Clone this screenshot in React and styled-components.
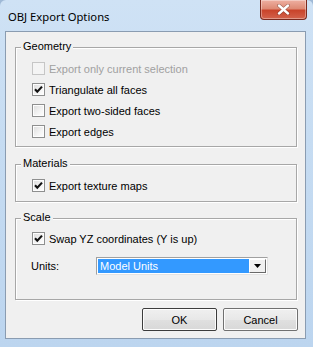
import React from "react";
import styled, { createGlobalStyle } from "styled-components";

const Global = createGlobalStyle`
  html, body { margin: 0; padding: 0; background: #9fb9d6; }
  body { width: 313px; height: 347px; overflow: hidden; }
  * { box-sizing: border-box; }
`;

const Window = styled.div`
  width: 313px;
  height: 347px;
  display: flex;
  flex-direction: column;
  padding: 0 7px 8px 5px;
  background: linear-gradient(180deg, #cfe2f5 0%, #c6dcf2 40%, #bcd5ef 100%);
  border-radius: 6px 6px 0 0;
  font-family: "Liberation Sans", Arial, sans-serif;
  font-size: 11px;
  color: #000;
`;

const TitleBar = styled.div`
  height: 31px;
  flex: none;
  display: flex;
  justify-content: space-between;
  align-items: flex-start;
`;

const Title = styled.div`
  font-family: "Noto Sans", "Open Sans", sans-serif;
  font-size: 11.25px;
  line-height: 16px;
  margin: 9px 0 0 3px;
  color: #000;
`;

const CloseButton = styled.div`
  width: 47px;
  height: 20px;
  margin-right: -1px;
  border: 1px solid #7a2a1f;
  border-top: none;
  border-radius: 0 0 4px 4px;
  background: linear-gradient(180deg, #eeb0a2 0%, #de8a75 45%, #c9442b 55%, #d3634c 100%);
  box-shadow: inset 0 0 0 1px rgba(255, 255, 255, 0.35);
  display: flex;
  align-items: center;
  justify-content: center;
`;

const Client = styled.div`
  flex: 1;
  display: flex;
  flex-direction: column;
  background: #f0f0f0;
  border: 1px solid #8a9cb1;
  padding: 15px 8px 7px 9px;
`;

const Group = styled.div`
  display: flex;
  flex-direction: column;
  border: 1px solid #a7a7a7;
  box-shadow: 1px 1px 0 #fff, inset 1px 1px 0 #fff;
  margin-top: ${(p) => p.$gap || 0}px;
  padding-bottom: ${(p) => p.$bottom}px;
`;

const Legend = styled.span`
  align-self: flex-start;
  margin: -8px 0 0 5px;
  padding: 0 2px;
  line-height: 13px;
  background: #f0f0f0;
`;

const Rows = styled.div`
  display: flex;
  flex-direction: column;
  padding-left: 16px;
  margin-top: ${(p) => p.$top}px;
`;

const Row = styled.label`
  height: 21px;
  display: flex;
  align-items: center;
  gap: 4px;
  color: ${(p) => (p.$disabled ? "#a0a0a0" : "#000")};
`;

const Box = styled.span`
  width: 13px;
  height: 13px;
  flex: none;
  border: 1px solid ${(p) => (p.$disabled ? "#c6c6c6" : "#8e8f8f")};
  background: ${(p) =>
    p.$disabled
      ? "#f4f4f4"
      : "linear-gradient(135deg, #dcdcdc 0%, #f4f4f4 60%, #ffffff 100%)"};
  box-shadow: inset 0 0 0 1px ${(p) => (p.$disabled ? "#f4f4f4" : "#fdfdfd")};
  display: flex;
  align-items: center;
  justify-content: center;
`;

const UnitsRow = styled.div`
  display: flex;
  align-items: center;
  padding-left: 15px;
  margin-top: 8px;
`;

const UnitsLabel = styled.span`
  width: 65px;
  flex: none;
`;

const Select = styled.div`
  width: 172px;
  height: 18px;
  display: flex;
  border: 1px solid #a0a0a0;
  border-right-color: #e3e3e3;
  border-bottom-color: #e3e3e3;
  background: #fff;
  padding: 1px;
`;

const SelectValue = styled.div`
  flex: 1;
  background: #3399ff;
  color: #fff;
  line-height: 14px;
  padding-left: 2px;
`;

const DropButton = styled.div`
  width: 17px;
  flex: none;
  background: #f0f0f0;
  border: 1px solid #fff;
  border-right-color: #696969;
  border-bottom-color: #696969;
  display: flex;
  align-items: center;
  justify-content: center;
`;

const Buttons = styled.div`
  display: flex;
  justify-content: flex-end;
  gap: 6px;
  margin: 8px -1px 0 0;
`;

const Button = styled.button`
  width: 75px;
  height: 23px;
  font-family: "Liberation Sans", Arial, sans-serif;
  font-size: 11px;
  color: #000;
  background: linear-gradient(180deg, #f0f0f0 0%, #e8e8e8 50%, #e0e0e0 51%, #d8d8d8 100%);
  border: 1px solid ${(p) => (p.$default ? "#3c3c3c" : "#707070")};
  border-radius: 2px;
  box-shadow: inset 0 0 0 1px #fcfcfc;
  padding: 0;
`;

function Check({ checked, disabled }) {
  return (
    <Box $disabled={disabled}>
      {checked && (
        <svg width="9" height="9" viewBox="0 0 9 9">
          <path d="M1 4.3 L3.3 6.8 L8 1.6" fill="none" stroke="#111" strokeWidth="2.1" />
        </svg>
      )}
    </Box>
  );
}

function Option({ label, checked, disabled }) {
  return (
    <Row $disabled={disabled}>
      <Check checked={checked} disabled={disabled} />
      <span>{label}</span>
    </Row>
  );
}

export default function App() {
  return (
    <>
      <Global />
      <Window>
        <TitleBar>
          <Title>OBJ Export Options</Title>
          <CloseButton>
            <svg width="13" height="11" viewBox="0 0 13 11">
              <path d="M2 1.5 L11 9.5 M11 1.5 L2 9.5" stroke="#4a1a12" strokeWidth="3.6" strokeLinecap="round" opacity="0.5" />
              <path d="M2 1.5 L11 9.5 M11 1.5 L2 9.5" stroke="#fff" strokeWidth="2.4" strokeLinecap="round" />
            </svg>
          </CloseButton>
        </TitleBar>
        <Client>
          <Group $bottom={4}>
            <Legend>Geometry</Legend>
            <Rows $top={5}>
              <Option label="Export only current selection" disabled />
              <Option label="Triangulate all faces" checked />
              <Option label="Export two-sided faces" />
              <Option label="Export edges" />
            </Rows>
          </Group>
          <Group $gap={17} $bottom={5}>
            <Legend>Materials</Legend>
            <Rows $top={5}>
              <Option label="Export texture maps" checked />
            </Rows>
          </Group>
          <Group $gap={16} $bottom={24}>
            <Legend>Scale</Legend>
            <Rows $top={4}>
              <Option label="Swap YZ coordinates (Y is up)" checked />
            </Rows>
            <UnitsRow>
              <UnitsLabel>Units:</UnitsLabel>
              <Select>
                <SelectValue>Model Units</SelectValue>
                <DropButton>
                  <svg width="7" height="4" viewBox="0 0 7 4">
                    <path d="M0 0 H7 L3.5 4 Z" fill="#000" />
                  </svg>
                </DropButton>
              </Select>
            </UnitsRow>
          </Group>
          <Buttons>
            <Button $default>OK</Button>
            <Button>Cancel</Button>
          </Buttons>
        </Client>
      </Window>
    </>
  );
}
